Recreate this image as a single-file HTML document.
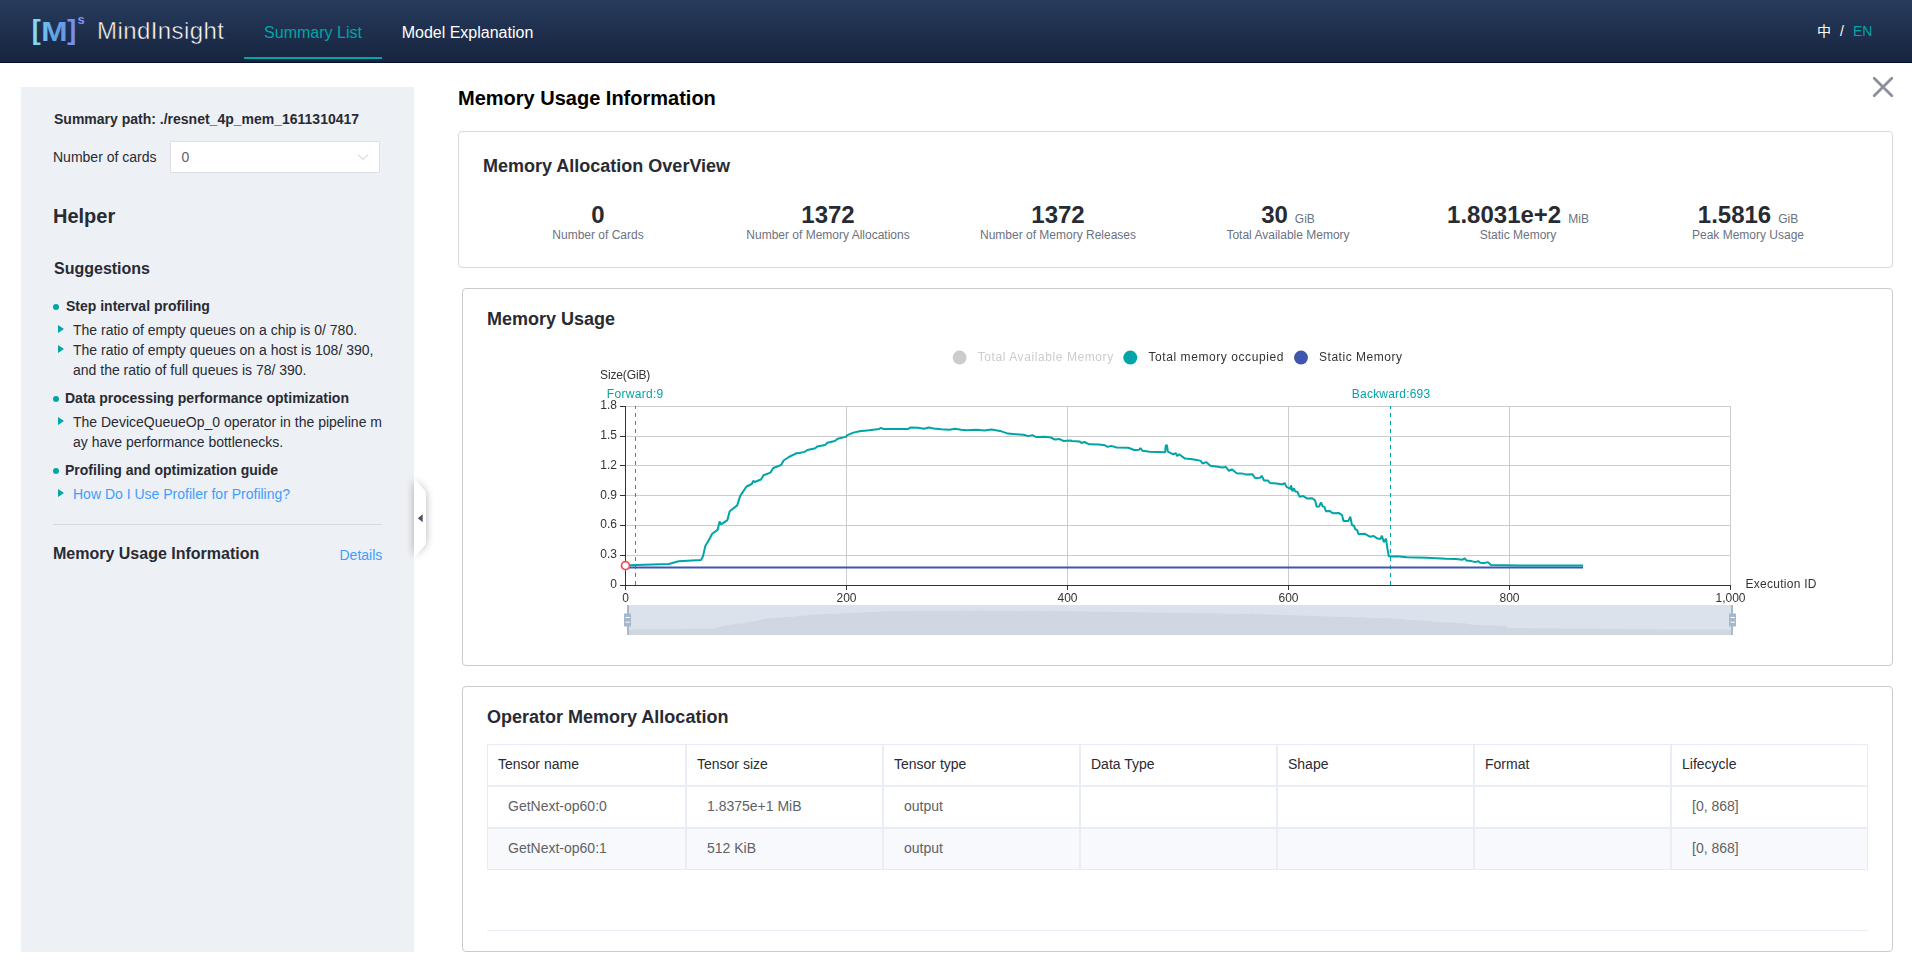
<!DOCTYPE html>
<html lang="en">
<head>
<meta charset="utf-8">
<title>MindInsight</title>
<style>
*{box-sizing:border-box;margin:0;padding:0}
html,body{width:1912px;height:973px;overflow:hidden;background:#fff}
body{font-family:"Liberation Sans","Noto Sans CJK SC",sans-serif;font-size:14px;color:#282b33;position:relative}
a{text-decoration:none;color:#409eff}
.hdr{position:absolute;left:0;top:0;width:1912px;height:63px;background:linear-gradient(180deg,#273b5d 0%,#16243e 100%);border-bottom:1px solid #051030}
.logo{position:absolute;left:0;top:0}
.nav{position:absolute;top:0;height:59px;line-height:66px;font-size:16px;color:#fff;text-align:center;white-space:nowrap}
.nav.on{color:#00a5a7;border-bottom:2px solid #00a5a7}
.lang span{position:absolute;top:21px;line-height:20px;font-size:14px;color:#fff;white-space:nowrap}
.lang .en{color:#00a5a7}
.side{position:absolute;left:21px;top:87px;width:393px;height:865px;background:#edf0f5}
.side .t{position:absolute;white-space:nowrap;line-height:20px}
.sel{position:absolute;left:149px;top:54px;width:210px;height:32px;background:#fff;border:1px solid #dcdfe6;border-radius:1px;line-height:30px;padding-left:10.4px;font-size:14px;color:#606266}
.sel svg{position:absolute;right:10px;top:9px}
.b{font-weight:bold}
.dot{position:absolute;left:32px;width:6px;height:6px;border-radius:50%;background:#00a5a7}
.tri{position:absolute;left:37px;width:0;height:0;border-left:6px solid #00a5a7;border-top:4.5px solid transparent;border-bottom:4.5px solid transparent}
.hr{position:absolute;left:32px;top:437px;width:329px;height:1px;background:#d5d9e0}
.handle{position:absolute;left:402px;top:462px}
.ttl{position:absolute;left:458px;top:86px;font-size:20px;font-weight:bold;color:#000;line-height:24px;white-space:nowrap}
.close{position:absolute;left:1871px;top:75px}
.card{position:absolute;border:1px solid #cbcbcb;border-radius:4px;background:#fff}
.card h3{position:absolute;left:24px;font-size:18px;font-weight:bold;line-height:22px;color:#282b33;white-space:nowrap}
.stat{position:absolute;top:69px;width:230px;text-align:center;white-space:nowrap}
.stat .n{font-size:24px;font-weight:bold;line-height:28px;height:28px;color:#282b33}
.stat .u{font-size:12px;font-weight:normal;color:#6c7280;margin-left:7px;line-height:0}
.stat .l{font-size:12px;line-height:14px;color:#6c7280;margin-top:-1px}
table{position:absolute;left:24px;top:57px;width:1381px;border-collapse:separate;border-spacing:0;table-layout:fixed;border-top:1px solid #e6ebf5;border-left:1px solid #e6ebf5}
th,td{border-right:2px solid #e9edf6;border-bottom:2px solid #e9edf6;height:42px;padding-bottom:2px;text-align:left;font-size:14px;font-weight:normal;white-space:nowrap;line-height:20px}
th:last-child,td:last-child{border-right:1px solid #e6ebf5}
tr:last-child td{border-bottom:1px solid #e6ebf5;height:41px}
th{color:#282b33;padding-left:10px}
td{color:#606266;padding-left:20px}
tr.s td{background:#f7f9fd}
col.c1{width:199px}col.c2{width:197px}col.c7{width:196px}
.bl{position:absolute;left:24px;top:243px;width:1381px;height:1px;background:#ebeef5}
svg text{font-family:"Liberation Sans","Noto Sans CJK SC",sans-serif;font-size:12px}
</style>
</head>
<body>
<div class="hdr">
<svg class="logo" width="240" height="63" viewBox="0 0 240 63">
<defs><linearGradient id="lg" gradientUnits="userSpaceOnUse" x1="32" y1="0" x2="76" y2="0"><stop offset="0" stop-color="#8be3f5"/><stop offset="0.5" stop-color="#5fa4e6"/><stop offset="1" stop-color="#7a8cf0"/></linearGradient><linearGradient id="lg2" gradientUnits="userSpaceOnUse" x1="-8.1" y1="0" x2="30.2" y2="0"><stop offset="0" stop-color="#8be3f5"/><stop offset="0.5" stop-color="#5fa4e6"/><stop offset="1" stop-color="#7a8cf0"/></linearGradient></defs>
<text x="31.7" y="39.3" font-weight="bold" fill="url(#lg)" style="font-size:27px">[</text>
<text x="0" y="40.7" transform="translate(41.3 0) scale(1.15 1)" font-weight="bold" fill="url(#lg2)" style="font-size:27.4px">M</text>
<text x="67.3" y="39.3" font-weight="bold" fill="url(#lg)" style="font-size:27px">]</text>
<text x="77.5" y="24" font-weight="bold" fill="#7f95f2" style="font-size:13px">s</text>
<text x="97" y="39" fill="#fff" stroke="#1f2e4d" stroke-width="0.5" paint-order="fill stroke" textLength="127" lengthAdjust="spacing" style="font-size:24px">MindInsight</text>
</svg>
<div class="nav on" style="left:244px;width:138px">Summary List</div>
<div class="nav" style="left:382px;width:171px">Model Explanation</div>
<div class="lang"><span style="left:1817px">中</span><span style="left:1840px">/</span><span class="en" style="left:1853px">EN</span></div>
</div>
<div class="side">
<div class="t b" style="left:33px;top:22px">Summary path: ./resnet_4p_mem_1611310417</div>
<div class="t" style="left:32px;top:60px">Number of cards</div>
<div class="sel">0<svg width="12" height="12" viewBox="0 0 12 12"><path d="M1 3.5L6 8.5L11 3.5" fill="none" stroke="#c3c7cf" stroke-width="1"/></svg></div>
<div class="t b" style="left:32px;top:117px;font-size:20px;line-height:24px">Helper</div>
<div class="t b" style="left:33px;top:172px;font-size:16px">Suggestions</div>
<i class="dot" style="top:217px"></i><div class="t b" style="left:45px;top:209px">Step interval profiling</div>
<i class="tri" style="top:238px"></i><div class="t" style="left:52px;top:233px">The ratio of empty queues on a chip is 0/ 780.</div>
<i class="tri" style="top:258px"></i><div class="t" style="left:52px;top:253px">The ratio of empty queues on a host is 108/ 390,<br>and the ratio of full queues is 78/ 390.</div>
<i class="dot" style="top:309px"></i><div class="t b" style="left:44px;top:301px">Data processing performance optimization</div>
<i class="tri" style="top:330px"></i><div class="t" style="left:52px;top:325px">The DeviceQueueOp_0 operator in the pipeline m<br>ay have performance bottlenecks.</div>
<i class="dot" style="top:381px"></i><div class="t b" style="left:44px;top:373px">Profiling and optimization guide</div>
<i class="tri" style="top:402px"></i><div class="t" style="left:52px;top:397px"><a>How Do I Use Profiler for Profiling?</a></div>
<div class="hr"></div>
<div class="t b" style="left:32px;top:457px;font-size:16px">Memory Usage Information</div>
<div class="t" style="left:318.5px;top:458px"><a>Details</a></div>
</div>
<svg class="handle" width="40" height="112" viewBox="0 0 40 112">
<defs><filter id="hs" x="-100%" y="-20%" width="300%" height="140%"><feGaussianBlur stdDeviation="4"/></filter></defs>
<path d="M12 18L24 31V81L12 94Z" fill="#000" opacity="0.3" filter="url(#hs)"/>
<path d="M12 16L22.5 28Q24 30 24 32V80Q24 82 22.5 84L12 96Z" fill="#fff"/>
<path d="M20.7 52.3L15.8 56.3L20.7 60.3Z" fill="#4c5161"/>
</svg>
<div class="ttl">Memory Usage Information</div>
<svg class="close" width="24" height="24" viewBox="0 0 24 24"><path d="M3.2 3.2L20.8 20.8M20.8 3.2L3.2 20.8" stroke="#8c909c" stroke-width="2.8" stroke-linecap="round" fill="none"/></svg>
<div class="card" style="left:458px;top:131px;width:1435px;height:137px;border-color:#dadada">
<h3 style="top:23px">Memory Allocation OverView</h3>
<div class="stat" style="left:24px"><div class="n">0</div><div class="l">Number of Cards</div></div>
<div class="stat" style="left:254px"><div class="n">1372</div><div class="l">Number of Memory Allocations</div></div>
<div class="stat" style="left:484px"><div class="n">1372</div><div class="l">Number of Memory Releases</div></div>
<div class="stat" style="left:714px"><div class="n">30<span class="u">GiB</span></div><div class="l">Total Available Memory</div></div>
<div class="stat" style="left:944px"><div class="n">1.8031e+2<span class="u">MiB</span></div><div class="l">Static Memory</div></div>
<div class="stat" style="left:1174px"><div class="n">1.5816<span class="u">GiB</span></div><div class="l">Peak Memory Usage</div></div>
</div>
<div class="card" style="left:462px;top:288px;width:1431px;height:378px">
<h3 style="top:19px">Memory Usage</h3>
<svg width="1429" height="376" viewBox="0 0 1429 376" style="position:absolute;left:0;top:0;will-change:transform">
<line x1="162.5" y1="117.5" x2="1268" y2="117.5" stroke="#ccc" stroke-width="1"/>
<line x1="162.5" y1="147.5" x2="1268" y2="147.5" stroke="#ccc" stroke-width="1"/>
<line x1="162.5" y1="176.5" x2="1268" y2="176.5" stroke="#ccc" stroke-width="1"/>
<line x1="162.5" y1="206.5" x2="1268" y2="206.5" stroke="#ccc" stroke-width="1"/>
<line x1="162.5" y1="236.5" x2="1268" y2="236.5" stroke="#ccc" stroke-width="1"/>
<line x1="162.5" y1="266.5" x2="1268" y2="266.5" stroke="#ccc" stroke-width="1"/>
<line x1="383.5" y1="117" x2="383.5" y2="296.5" stroke="#ccc" stroke-width="1"/>
<line x1="604.5" y1="117" x2="604.5" y2="296.5" stroke="#ccc" stroke-width="1"/>
<line x1="825.5" y1="117" x2="825.5" y2="296.5" stroke="#ccc" stroke-width="1"/>
<line x1="1046.5" y1="117" x2="1046.5" y2="296.5" stroke="#ccc" stroke-width="1"/>
<line x1="1267.5" y1="117" x2="1267.5" y2="296.5" stroke="#ccc" stroke-width="1"/>
<line x1="162.5" y1="117" x2="162.5" y2="297" stroke="#333" stroke-width="1"/>
<line x1="162" y1="296.5" x2="1268" y2="296.5" stroke="#333" stroke-width="1"/>
<line x1="157" y1="117.5" x2="162.5" y2="117.5" stroke="#333" stroke-width="1"/>
<line x1="157" y1="147.5" x2="162.5" y2="147.5" stroke="#333" stroke-width="1"/>
<line x1="157" y1="176.5" x2="162.5" y2="176.5" stroke="#333" stroke-width="1"/>
<line x1="157" y1="206.5" x2="162.5" y2="206.5" stroke="#333" stroke-width="1"/>
<line x1="157" y1="236.5" x2="162.5" y2="236.5" stroke="#333" stroke-width="1"/>
<line x1="157" y1="266.5" x2="162.5" y2="266.5" stroke="#333" stroke-width="1"/>
<line x1="157" y1="296.5" x2="162.5" y2="296.5" stroke="#333" stroke-width="1"/>
<line x1="162.5" y1="296.5" x2="162.5" y2="301" stroke="#333" stroke-width="1"/>
<line x1="383.5" y1="296.5" x2="383.5" y2="301" stroke="#333" stroke-width="1"/>
<line x1="604.5" y1="296.5" x2="604.5" y2="301" stroke="#333" stroke-width="1"/>
<line x1="825.5" y1="296.5" x2="825.5" y2="301" stroke="#333" stroke-width="1"/>
<line x1="1046.5" y1="296.5" x2="1046.5" y2="301" stroke="#333" stroke-width="1"/>
<line x1="1267.5" y1="296.5" x2="1267.5" y2="301" stroke="#333" stroke-width="1"/>
<text x="154" y="120.1" fill="#333" text-anchor="end">1.8</text>
<text x="154" y="149.933" fill="#333" text-anchor="end">1.5</text>
<text x="154" y="179.767" fill="#333" text-anchor="end">1.2</text>
<text x="154" y="209.6" fill="#333" text-anchor="end">0.9</text>
<text x="154" y="239.433" fill="#333" text-anchor="end">0.6</text>
<text x="154" y="269.267" fill="#333" text-anchor="end">0.3</text>
<text x="154" y="299.1" fill="#333" text-anchor="end">0</text>
<text x="162.5" y="312.7" fill="#333" text-anchor="middle">0</text>
<text x="383.5" y="312.7" fill="#333" text-anchor="middle">200</text>
<text x="604.5" y="312.7" fill="#333" text-anchor="middle">400</text>
<text x="825.5" y="312.7" fill="#333" text-anchor="middle">600</text>
<text x="1046.5" y="312.7" fill="#333" text-anchor="middle">800</text>
<text x="1267.5" y="312.7" fill="#333" text-anchor="middle">1,000</text>
<text x="162.2" y="89.8" fill="#333" text-anchor="middle" textLength="50.3" lengthAdjust="spacing">Size(GiB)</text>
<text x="1282.5" y="299" fill="#333" text-anchor="start" textLength="71" lengthAdjust="spacing">Execution ID</text>
<circle cx="496.6" cy="68.6" r="7" fill="#ccc"/>
<text x="514.7" y="72.2" fill="#ccc" text-anchor="start" textLength="135.5" lengthAdjust="spacing">Total Available Memory</text>
<circle cx="667.3" cy="68.6" r="7" fill="#00a5a7"/>
<text x="685.4" y="72.2" fill="#333" text-anchor="start" textLength="135" lengthAdjust="spacing">Total memory occupied</text>
<circle cx="838" cy="68.6" r="7" fill="#3f56b0"/>
<text x="856" y="72.2" fill="#333" text-anchor="start" textLength="83" lengthAdjust="spacing">Static Memory</text>
<line x1="172.5" y1="296" x2="172.5" y2="117" stroke="#00a5a7" stroke-width="1" stroke-dasharray="4 4"/>
<line x1="927.5" y1="296" x2="927.5" y2="117" stroke="#00a5a7" stroke-width="1" stroke-dasharray="4 4"/>
<text x="172" y="109" fill="#00a5a7" text-anchor="middle" textLength="56.5" lengthAdjust="spacing">Forward:9</text>
<text x="928" y="109" fill="#00a5a7" text-anchor="middle" textLength="78.3" lengthAdjust="spacing">Backward:693</text>
<g transform="translate(-463 -289)"><path d="M625.5 567.5H1583" stroke="#3f56b0" stroke-width="2" fill="none"/><path d="M625.5 565.6L635.6 565L668.8 564L678.6 561.3L701 560.1L703 556.2L705.3 546.1L708.8 540.2L712.2 533.8L717.6 529.9L719.6 521.5L721.2 524.4L727.4 520.1L729.7 511.3L737.2 505.4L740.1 496.1L746.5 486.5L751.8 484L753.2 480.8L754.7 482L761 479.5L763.5 475.2L770.4 472.6L773.3 468L781.1 465L783.6 460.5L788.9 457L796.7 453.1L798.7 453.3L804.5 451.9L807.5 450L815.3 448.2L817.2 446.5L825 444.9L827.4 442.8L834.8 441L837.7 438.7L845.5 436.9L847.5 435.1L853.4 432.6L859.5 431.2L869.3 430.3L879.1 428.9L881 427.9L883 428.9L908.3 428.9L910.3 427.5L918.1 427.7L924 428.7L928.8 427.5L933.7 428.5L941.5 429.3L949.4 429.7L955.2 428.7L961.1 429.7L966.9 430.3L976.7 429.7L984.5 430.5L991.3 429.5L1000.1 430.9L1007.9 433.6L1015.7 434.2L1023.6 434.8L1028.4 436.1L1032.3 435.1L1036.3 437.1L1045 436.7L1050.9 437.5L1054.8 439.6L1059.7 439.1L1063.6 441L1070.4 440.4L1071.7 441L1079.5 441.4L1081.5 443L1084.4 442L1089.3 444.3L1099.1 444.5L1104.9 445.3L1107.8 446.9L1111.2 445.9L1116.6 447.5L1128.3 447.8L1134.2 450L1139.1 449.8L1140.5 448L1142.4 450.8L1149.8 451.7L1157.6 451.9L1165.1 452.3L1165.8 445.3L1167 445.3L1167.8 451.7L1173.3 454.3L1175.6 453.1L1177.2 456L1179.1 454.3L1181.1 455.7L1185 458.6L1190.8 459L1196.7 459.9L1200.6 460.9L1202.6 463.5L1206.1 462.1L1210.4 465.8L1216.2 466.4L1222.1 467.4L1226 467L1228.9 470.9L1231.8 469.3L1236.7 473.2L1241.6 473.4L1245.5 474.4L1252.3 474.2L1255.3 478.1L1260.2 477.7L1261.7 475.8L1264.1 480.5L1268 480.6L1269.9 483L1276.8 483.4L1282.6 484.4L1284.6 483L1286.5 486.9L1290.4 488.8L1291 485.3L1292.4 491.4L1293.9 488.3L1295.3 491.4L1297.3 491.8L1297.6 492.2L1299.5 496.7L1303.4 496.1L1307.3 498.6L1312.2 498.2L1315.1 500.6L1316.7 506.8L1319.1 506.4L1321 502.5L1322.6 506.4L1324.5 507L1325.9 511.3L1329.8 510.9L1332.7 513.3L1338.6 512.9L1342.1 515.2L1343.5 521.1L1348.3 521.1L1350.3 516.6L1351.9 525L1354.2 526L1355.2 529.3L1357.1 529.9L1358.5 534.3L1364.9 533.8L1369.8 536.7L1373.7 536.1L1377.6 538.6L1380.6 539L1381.9 535.7L1383.9 542.2L1386 538.6L1387.4 548.4L1388.8 556.2L1391.3 556.6L1397.2 556.2L1406.9 557.2L1416.7 557.4L1426.5 557.8L1436.2 558.2L1446 558.8L1455.7 559.1L1462.6 559.7L1464.5 558.2L1466.5 560.5L1471.4 561.1L1475.3 562.1L1478.2 561.1L1480.2 562.7L1484.1 563.1L1488 562.1L1490.9 565L1520 565.6L1520 565.6L1583 565.6" stroke="#00a5a7" stroke-width="2" fill="none" stroke-linejoin="bevel"/><circle cx="625.5" cy="565.6" r="4" fill="#fff" stroke="#f2525f" stroke-width="1.8"/>
<rect x="627" y="605" width="1106" height="30" fill="#dce2ec"/><path d="M627 635L627 629.4L638.7 629.3L677 629.2L688.3 628.8L714.2 628.6L716.5 628.1L719.2 626.7L723.2 625.9L727.1 625L733.4 624.5L735.7 623.3L737.5 623.7L744.7 623.2L747.4 622L756 621.1L759.4 619.9L766.8 618.6L772.9 618.2L774.5 617.8L776.2 617.9L783.5 617.6L786.4 617L794.4 616.7L797.7 616L806.7 615.6L809.6 615L815.7 614.5L824.8 614L827.1 614L833.8 613.8L837.2 613.6L846.2 613.3L848.4 613.1L857.4 612.9L860.2 612.6L868.8 612.3L872.1 612L881.1 611.8L883.4 611.5L890.3 611.2L897.3 611L908.6 610.9L919.9 610.7L922.1 610.6L924.4 610.7L953.7 610.7L956 610.5L965 610.5L971.8 610.7L977.3 610.5L983 610.6L992 610.7L1001.1 610.8L1007.8 610.7L1014.7 610.8L1021.4 610.9L1032.7 610.8L1041.7 610.9L1049.5 610.8L1059.7 611L1068.7 611.3L1077.7 611.4L1086.9 611.5L1092.4 611.7L1096.9 611.5L1101.5 611.8L1111.6 611.8L1118.4 611.9L1122.9 612.2L1128.5 612.1L1133.1 612.3L1140.9 612.3L1142.4 612.3L1151.4 612.4L1153.7 612.6L1157.1 612.5L1162.7 612.8L1174.1 612.8L1180.8 612.9L1184.1 613.1L1188 613L1194.3 613.2L1207.8 613.3L1214.6 613.6L1220.3 613.5L1221.9 613.3L1224.1 613.7L1232.6 613.8L1241.6 613.8L1250.3 613.9L1251.1 612.9L1252.5 612.9L1253.4 613.8L1259.8 614.2L1262.4 614L1264.3 614.4L1266.5 614.2L1268.8 614.4L1273.3 614.7L1280 614.8L1286.8 614.9L1291.3 615.1L1293.6 615.4L1297.7 615.2L1302.6 615.7L1309.3 615.8L1316.1 616L1320.6 615.9L1324 616.4L1327.3 616.2L1333 616.7L1338.7 616.8L1343.2 616.9L1351 616.9L1354.5 617.4L1360.1 617.4L1361.9 617.1L1364.7 617.7L1369.2 617.8L1371.4 618.1L1379.3 618.1L1386 618.3L1388.3 618.1L1390.5 618.6L1395 618.9L1395.7 618.4L1397.3 619.2L1399.1 618.8L1400.7 619.2L1403 619.3L1403.4 619.3L1405.5 620L1410.1 619.9L1414.6 620.2L1420.2 620.2L1423.6 620.5L1425.4 621.3L1428.2 621.3L1430.4 620.7L1432.2 621.3L1434.4 621.4L1436 622L1440.5 621.9L1443.9 622.2L1450.7 622.2L1454.8 622.5L1456.4 623.3L1461.9 623.3L1464.2 622.7L1466.1 623.8L1468.7 624L1469.9 624.4L1472.1 624.5L1473.7 625.1L1481.1 625L1486.8 625.4L1491.3 625.3L1495.8 625.7L1499.2 625.7L1500.7 625.3L1503 626.2L1505.5 625.7L1507.1 627L1508.7 628.1L1511.6 628.1L1518.4 628.1L1529.6 628.2L1540.9 628.3L1552.2 628.3L1563.4 628.4L1574.8 628.4L1586 628.5L1593.9 628.6L1596.1 628.4L1598.4 628.7L1604.1 628.8L1608.6 628.9L1612 628.8L1614.3 629L1618.8 629L1623.3 628.9L1626.6 629.3L1660.2 629.4L1660.2 629.4L1733 629.4L1733 635Z" fill="#d0d7e2"/>
<rect x="627" y="605" width="2" height="30" fill="#a7b7cc"/><rect x="624" y="613.5" width="7" height="13" fill="#a7b7cc"/><rect x="625.5" y="617" width="4.3" height="1" fill="#fff"/><rect x="625.5" y="621.7" width="4.3" height="1" fill="#fff"/>
<rect x="1731" y="605" width="2" height="30" fill="#a7b7cc"/><rect x="1729" y="613.5" width="7" height="13" fill="#a7b7cc"/><rect x="1730.5" y="617" width="4.3" height="1" fill="#fff"/><rect x="1730.5" y="621.7" width="4.3" height="1" fill="#fff"/>
</g>
</svg>
</div>
<div class="card" style="left:462px;top:686px;width:1431px;height:266px">
<h3 style="top:19px">Operator Memory Allocation</h3>
<table>
<colgroup><col class="c1"><col class="c2"><col class="c2"><col class="c2"><col class="c2"><col class="c2"><col class="c7"></colgroup>
<tr><th>Tensor name</th><th>Tensor size</th><th>Tensor type</th><th>Data Type</th><th>Shape</th><th>Format</th><th>Lifecycle</th></tr>
<tr><td>GetNext-op60:0</td><td>1.8375e+1 MiB</td><td>output</td><td></td><td></td><td></td><td>[0, 868]</td></tr>
<tr class="s"><td>GetNext-op60:1</td><td>512 KiB</td><td>output</td><td></td><td></td><td></td><td>[0, 868]</td></tr>
</table>
<div class="bl"></div>
</div>
</body>
</html>
